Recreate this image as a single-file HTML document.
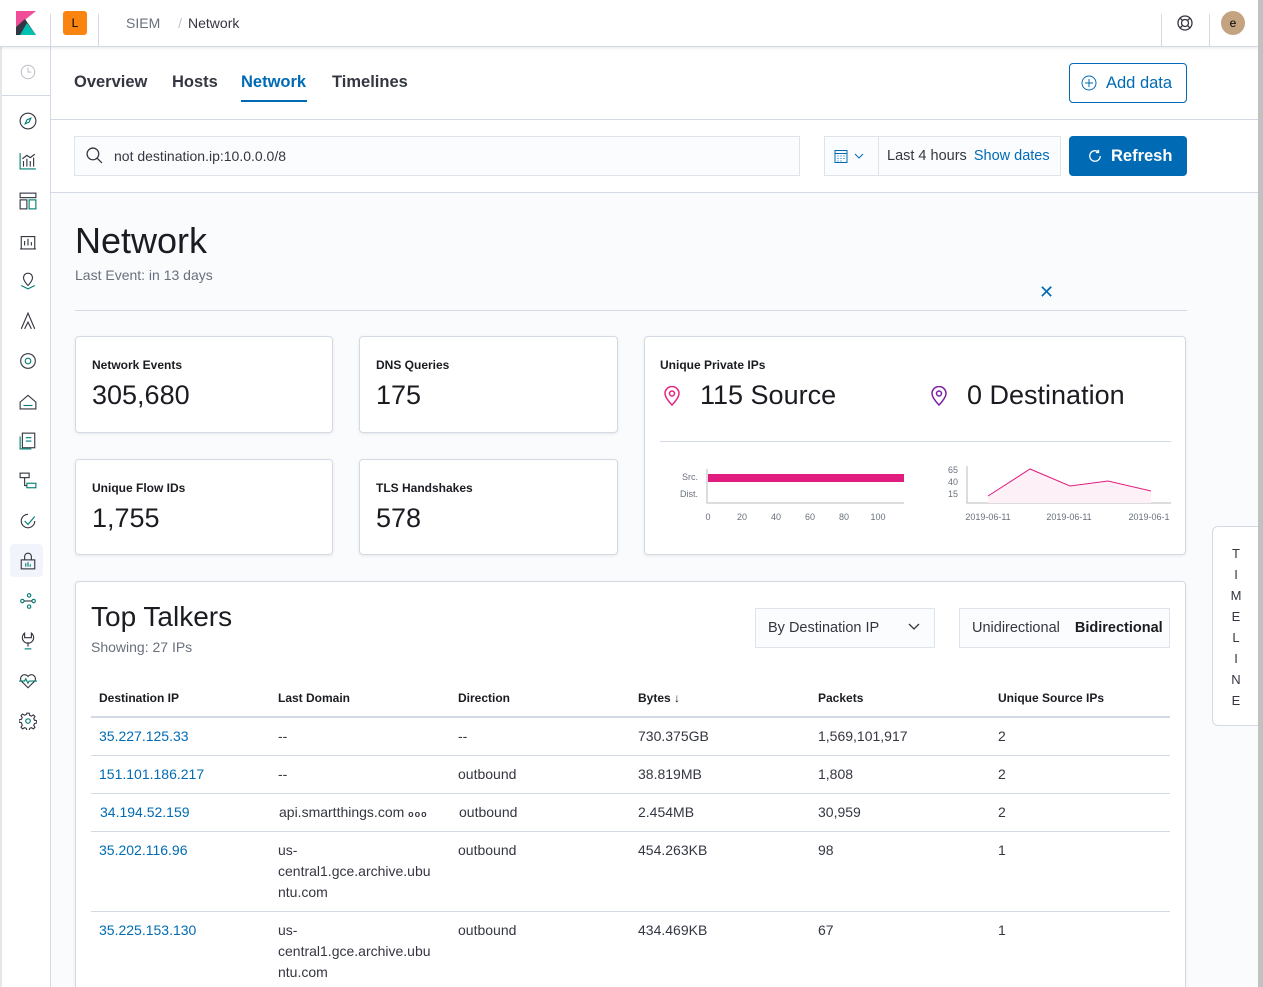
<!DOCTYPE html>
<html><head><meta charset="utf-8"><style>
*{box-sizing:border-box;margin:0;padding:0}
html,body{width:1263px;height:987px;overflow:hidden}
body{font-family:"Liberation Sans",sans-serif;color:#343741;background:#fafbfd;position:relative}
.abs{position:absolute}
.hdr{left:0;top:0;width:1258px;height:47px;background:#fff;border-bottom:1px solid #d3dae6;box-shadow:0 1px 3px rgba(0,0,0,.1);z-index:3}
.side{left:0;top:47px;width:51px;height:940px;background:#fff;border-right:1px solid #d3dae6;border-left:2px solid #e4e6ea;z-index:2}
.top{left:51px;top:47px;width:1207px;height:146px;background:#fff}
.card{background:#fff;border:1px solid #d3dae6;border-radius:4px;box-shadow:0 1px 3px rgba(0,0,0,.08)}
.lbl{font-size:12px;font-weight:bold;color:#1a1c21}
.big{font-size:27px;color:#1a1c21;font-weight:300}
.ico{position:absolute;left:17px;width:18px;height:18px}
.th{position:absolute;top:691px;font-size:12px;font-weight:bold;color:#1a1c21}
.td{position:absolute;font-size:14px;line-height:21px;color:#343741}
.lk{color:#006bb4}
.rl{position:absolute;left:91px;width:1079px;height:1px;background:#d3dae6}
.tab{position:absolute;top:26px;font-size:16.5px;font-weight:bold;color:#343741}
</style></head><body>
<div class="abs hdr">
 <svg class="abs" style="left:16px;top:11px" width="20" height="24" viewBox="0 0 20 24"><path d="M0 0H20L0 16Z" fill="#f04e98"/><path d="M0 16L9 8 20 24H0Z" fill="#343741"/><path d="M4 24L11 12 20 24Z" fill="#00bfb3"/></svg>
 <div class="abs" style="left:50px;top:14px;width:1px;height:33px;background:#d3dae6"></div>
 <div class="abs" style="left:63px;top:11px;width:24px;height:24px;background:#f98510;border-radius:3px;font-size:12px;text-align:center;line-height:24px;color:#000">L</div>
 <div class="abs" style="left:98px;top:14px;width:1px;height:33px;background:#d3dae6"></div>
 <div class="abs" style="left:126px;top:15px;font-size:14px;color:#69707d">SIEM <span style="color:#c0c4cc;margin:0 6px 0 14px">/</span><span style="color:#343741">Network</span></div>
 <div class="abs" style="left:1161px;top:14px;width:1px;height:33px;background:#d3dae6"></div>
 <div class="abs" style="left:1209px;top:14px;width:1px;height:33px;background:#d3dae6"></div>
 <svg class="abs" style="left:1177px;top:15px" width="16" height="16" viewBox="0 0 16 16" fill="none" stroke="#343741" stroke-width="1.3"><circle cx="8" cy="8" r="7"/><circle cx="8" cy="8" r="3.5"/><path d="M3 3l2.5 2.5M13 3l-2.5 2.5M3 13l2.5-2.5M13 13l-2.5-2.5"/></svg>
 <div class="abs" style="left:1221px;top:11px;width:24px;height:24px;border-radius:50%;background:#c4a381;font-size:12px;text-align:center;line-height:24px;color:#000">e</div>
</div>
<div class="abs side">
 <div class="abs" style="left:0;top:48px;width:49px;height:1px;background:#d3dae6"></div>
 <svg class="ico" style="top:16px" viewBox="0 0 16 16" fill="none" stroke="#c0c4cc"><circle cx="8" cy="8" r="6"/><path d="M8 4v4h3"/></svg>
 <svg class="ico" style="top:65px" viewBox="0 0 16 16" fill="none" stroke="#343741"><circle cx="8" cy="8" r="7"/><path d="M10.5 5.5L9 9 5.5 10.5 7 7z" stroke="#017d73"/></svg>
 <svg class="ico" style="top:105px" viewBox="0 0 16 16" fill="none" stroke="#343741"><path d="M1 1v14h14" stroke="#017d73"/><path d="M4 13V8M7 13V6M10 13V8M13 13V5M3 6l4-3 3 2 4-3"/></svg>
 <svg class="ico" style="top:145px" viewBox="0 0 16 16" fill="none" stroke="#343741"><rect x="1" y="1" width="14" height="4"/><rect x="1" y="7" width="6" height="8"/><rect x="9" y="7" width="6" height="8" stroke="#017d73"/></svg>
 <svg class="ico" style="top:185px" viewBox="0 0 16 16" fill="none" stroke="#343741"><path d="M1 15h14M2 15V4h12v11M5 12V8M8 12V6M11 12V9"/></svg>
 <svg class="ico" style="top:225px" viewBox="0 0 16 16" fill="none" stroke="#343741"><path d="M8 1a4 4 0 014 4c0 3-4 7-4 7S4 8 4 5a4 4 0 014-4z"/><path d="M2 12l6 3 6-3" stroke="#017d73"/></svg>
 <svg class="ico" style="top:265px" viewBox="0 0 16 16" fill="none" stroke="#343741"><path d="M2 15L8 1l6 14M5 15l3-6 3 6"/></svg>
 <svg class="ico" style="top:305px" viewBox="0 0 16 16" fill="none" stroke="#343741"><circle cx="8" cy="8" r="6.5"/><circle cx="8" cy="8" r="2.5" stroke="#017d73"/></svg>
 <svg class="ico" style="top:345px" viewBox="0 0 16 16" fill="none" stroke="#343741"><path d="M1 9l7-6 7 6v6H1z"/><path d="M4 12h8" stroke="#017d73"/></svg>
 <svg class="ico" style="top:385px" viewBox="0 0 16 16" fill="none" stroke="#343741"><rect x="3" y="1" width="11" height="13"/><path d="M6 5h5M6 8h5M1 4v11h10" stroke="#017d73"/></svg>
 <svg class="ico" style="top:425px" viewBox="0 0 16 16" fill="none" stroke="#343741"><rect x="1" y="1" width="8" height="4"/><rect x="7" y="10" width="8" height="4" stroke="#017d73"/><path d="M5 5v7h2"/></svg>
 <svg class="ico" style="top:465px" viewBox="0 0 16 16" fill="none" stroke="#343741"><path d="M14 8A6 6 0 118 2"/><path d="M5 8l3 3 6-7" stroke="#017d73"/></svg>
 <div class="abs" style="left:8px;top:497px;width:33px;height:33px;background:#f1f4fa;border-radius:4px"></div>
 <svg class="ico" style="top:505px" viewBox="0 0 16 16" fill="none" stroke="#343741"><rect x="2" y="7" width="12" height="8"/><path d="M5 7V4a3 3 0 016 0v3"/><path d="M6 10v3M8 9v4M10 11v2" stroke="#017d73"/></svg>
 <svg class="ico" style="top:545px" viewBox="0 0 16 16" fill="none" stroke="#017d73"><circle cx="9" cy="3" r="1.5"/><circle cx="3" cy="8" r="1.5"/><circle cx="13" cy="8" r="1.5"/><circle cx="9" cy="13" r="1.5"/><path d="M4.5 8h7" stroke="#343741"/></svg>
 <svg class="ico" style="top:585px" viewBox="0 0 16 16" fill="none" stroke="#343741"><path d="M5 1v4h6V1a5 5 0 11-6 0zM8 9v4"/><path d="M5 15h6" stroke="#017d73"/></svg>
 <svg class="ico" style="top:625px" viewBox="0 0 16 16" fill="none" stroke="#343741"><path d="M8 14L2 8a3.5 3.5 0 016-4 3.5 3.5 0 016 4z"/><path d="M0 8h5l1-2 2 4 1-2h7" stroke="#017d73"/></svg>
 <svg class="ico" style="top:665px" viewBox="0 0 16 16" fill="none" stroke="#343741"><path d="M7 1h2l.5 2 1.5.7 1.8-1.1 1.4 1.4-1.1 1.8.7 1.5 2 .5v2l-2 .5-.7 1.5 1.1 1.8-1.4 1.4-1.8-1.1-1.5.7-.5 2H7l-.5-2-1.5-.7-1.8 1.1-1.4-1.4 1.1-1.8L2.2 9.5 0 9V7l2.2-.5.7-1.5-1.1-1.8 1.4-1.4 1.8 1.1 1.5-.7z"/><circle cx="8" cy="8" r="2" stroke="#017d73"/></svg>
</div>
<div class="abs top">
 <div class="tab" style="left:23px">Overview</div>
 <div class="tab" style="left:121px">Hosts</div>
 <div class="tab" style="left:190px;color:#006bb4">Network</div>
 <div class="abs" style="left:190px;top:53px;width:66px;height:2px;background:#006bb4"></div>
 <div class="tab" style="left:281px">Timelines</div>
 <div class="abs" style="left:1018px;top:16px;width:118px;height:40px;border:1px solid #006bb4;border-radius:4px;color:#006bb4;font-size:16.5px;line-height:38px;padding-left:36px">Add data</div>
 <svg class="abs" style="left:1030px;top:28px" width="16" height="16" viewBox="0 0 16 16" fill="none" stroke="#006bb4"><circle cx="8" cy="8" r="7"/><path d="M8 4v8M4 8h8"/></svg>
 <div class="abs" style="left:0;top:72px;width:1207px;height:1px;background:#d3dae6"></div>
 <div class="abs" style="left:23px;top:89px;width:726px;height:40px;background:#fbfcfd;border:1px solid #dfe4ec;font-size:14px;line-height:38px;padding-left:39px;color:#343741">not destination.ip:10.0.0.0/8</div>
 <svg class="abs" style="left:35px;top:100px" width="17" height="17" viewBox="0 0 16 16" fill="none" stroke="#343741" stroke-width="1.2"><circle cx="6.5" cy="6.5" r="5.5"/><path d="M10.5 10.5L15 15"/></svg>
 <div class="abs" style="left:773px;top:89px;width:237px;height:40px;background:#fbfcfd;border:1px solid #dfe4ec"></div>
 <div class="abs" style="left:827px;top:89px;width:1px;height:40px;background:#dfe4ec"></div>
 <svg class="abs" style="left:783px;top:102px" width="32" height="14" viewBox="0 0 32 14" fill="none" stroke="#006bb4"><rect x="1" y="1.5" width="12" height="12"/><path d="M1 4.5h12M3.5 7h1M6.5 7h1M9.5 7h1M3.5 9.5h1M6.5 9.5h1M9.5 9.5h1M3.5 12h1M6.5 12h1"/><path d="M21 5l4 4 4-4"/></svg>
 <div class="abs" style="left:836px;top:101px;font-size:14.5px;color:#343741">Last 4 hours <span style="color:#006bb4;margin-left:3px">Show dates</span></div>
 <div class="abs" style="left:1018px;top:89px;width:118px;height:40px;background:#006bb4;border-radius:4px;color:#fff;font-size:16.5px;font-weight:bold;line-height:40px;padding-left:42px">Refresh</div>
 <svg class="abs" style="left:1037px;top:102px" width="14" height="14" viewBox="0 0 16 16" fill="none" stroke="#fff" stroke-width="1.5"><path d="M14 8a6 6 0 11-2-4.5M12 1v3h-3"/></svg>
 <div class="abs" style="left:0;top:145px;width:1207px;height:1px;background:#d3dae6"></div>
</div>
<div class="abs" style="left:75px;top:220px;font-size:36px;font-weight:300;color:#1a1c21">Network</div>
<div class="abs" style="left:75px;top:267px;font-size:14px;color:#69707d">Last Event: in 13 days</div>
<div class="abs" style="left:1039px;top:282px;font-size:18px;color:#006bb4">✕</div>
<div class="abs" style="left:75px;top:310px;width:1112px;height:1px;background:#d3dae6"></div>

<div class="abs card" style="left:75px;top:336px;width:258px;height:97px"><div class="abs lbl" style="left:16px;top:21px">Network Events</div><div class="abs big" style="left:16px;top:43px">305,680</div></div>
<div class="abs card" style="left:359px;top:336px;width:259px;height:97px"><div class="abs lbl" style="left:16px;top:21px">DNS Queries</div><div class="abs big" style="left:16px;top:43px">175</div></div>
<div class="abs card" style="left:75px;top:459px;width:258px;height:96px"><div class="abs lbl" style="left:16px;top:21px">Unique Flow IDs</div><div class="abs big" style="left:16px;top:43px">1,755</div></div>
<div class="abs card" style="left:359px;top:459px;width:259px;height:96px"><div class="abs lbl" style="left:16px;top:21px">TLS Handshakes</div><div class="abs big" style="left:16px;top:43px">578</div></div>
<div class="abs card" style="left:644px;top:336px;width:542px;height:219px">
 <div class="abs lbl" style="left:15px;top:21px">Unique Private IPs</div>
 <svg class="abs" style="left:19px;top:49px" width="16" height="20" viewBox="0 0 16 20" fill="none" stroke="#e7237f" stroke-width="1.5"><path d="M8 19S1 12 1 7.5a7 7 0 0114 0C15 12 8 19 8 19z"/><circle cx="8" cy="7.5" r="2.5"/></svg>
 <div class="abs big" style="left:55px;top:43px">115 Source</div>
 <svg class="abs" style="left:286px;top:49px" width="16" height="20" viewBox="0 0 16 20" fill="none" stroke="#7b1fa2" stroke-width="1.5"><path d="M8 19S1 12 1 7.5a7 7 0 0114 0C15 12 8 19 8 19z"/><circle cx="8" cy="7.5" r="2.5"/></svg>
 <div class="abs big" style="left:322px;top:43px">0 Destination</div>
 <div class="abs" style="left:15px;top:104px;width:511px;height:1px;background:#d3dae6"></div>
 <svg class="abs" style="left:0;top:120px" width="540" height="70" viewBox="0 0 540 70" font-family="Liberation Sans" font-size="9" fill="#69707d">
  <text x="53" y="23" text-anchor="end">Src.</text><text x="53" y="40" text-anchor="end">Dist.</text>
  <path d="M62 12v34h197" stroke="#bbb" fill="none"/>
  <rect x="63" y="17" width="196" height="8" fill="#e01c7e"/>
  <g text-anchor="middle"><text x="63" y="63">0</text><text x="97" y="63">20</text><text x="131" y="63">40</text><text x="165" y="63">60</text><text x="199" y="63">80</text><text x="233" y="63">100</text></g>
  <text x="313" y="16" text-anchor="end">65</text><text x="313" y="28" text-anchor="end">40</text><text x="313" y="40" text-anchor="end">15</text>
  <path d="M322 9v37h204" stroke="#bbb" fill="none"/>
  <path d="M343 39L385 12 425 29 463 24 506 34V46H343Z" fill="#fdf0f6"/>
  <path d="M343 39L385 12 425 29 463 24 506 34" stroke="#e01c7e" fill="none"/>
  <g text-anchor="middle"><text x="343" y="63">2019-06-11</text><text x="424" y="63">2019-06-11</text><text x="504" y="63">2019-06-1</text></g>
 </svg>
</div>

<div class="abs card" style="left:75px;top:581px;width:1111px;height:500px"></div>
<div class="abs" style="left:91px;top:601px;font-size:28px;font-weight:300;color:#1a1c21">Top Talkers</div>
<div class="abs" style="left:91px;top:639px;font-size:14px;color:#69707d">Showing: 27 IPs</div>
<div class="abs" style="left:755px;top:608px;width:180px;height:40px;background:#fbfcfd;border:1px solid #dfe4ec;font-size:14.5px;line-height:38px;padding-left:12px">By Destination IP</div>
<svg class="abs" style="left:907px;top:622px" width="14" height="10" viewBox="0 0 14 10" fill="none" stroke="#343741" stroke-width="1.3"><path d="M2 2l5 5 5-5"/></svg>
<div class="abs" style="left:959px;top:608px;width:211px;height:40px;background:#fbfcfd;border:1px solid #dfe4ec;font-size:14.5px;line-height:38px;padding-left:12px">Unidirectional <b style="margin-left:11px;color:#1a1c21">Bidirectional</b></div>

<div class="th" style="left:99px">Destination IP</div>
<div class="th" style="left:278px">Last Domain</div>
<div class="th" style="left:458px">Direction</div>
<div class="th" style="left:638px">Bytes ↓</div>
<div class="th" style="left:818px">Packets</div>
<div class="th" style="left:998px">Unique Source IPs</div>
<div class="rl" style="top:716px;height:2px"></div>

<div class="td lk" style="left:99px;top:726px">35.227.125.33</div><div class="td" style="left:278px;top:726px">--</div><div class="td" style="left:458px;top:726px">--</div><div class="td" style="left:638px;top:726px">730.375GB</div><div class="td" style="left:818px;top:726px">1,569,101,917</div><div class="td" style="left:998px;top:726px">2</div>
<div class="rl" style="top:755px"></div>
<div class="td lk" style="left:99px;top:764px">151.101.186.217</div><div class="td" style="left:278px;top:764px">--</div><div class="td" style="left:458px;top:764px">outbound</div><div class="td" style="left:638px;top:764px">38.819MB</div><div class="td" style="left:818px;top:764px">1,808</div><div class="td" style="left:998px;top:764px">2</div>
<div class="rl" style="top:793px"></div>
<div class="td lk" style="left:100px;top:802px">34.194.52.159</div><div class="td" style="left:279px;top:802px">api.smartthings.com <span style="font-size:9px;font-weight:bold;letter-spacing:1px">ooo</span></div><div class="td" style="left:459px;top:802px">outbound</div><div class="td" style="left:638px;top:802px">2.454MB</div><div class="td" style="left:818px;top:802px">30,959</div><div class="td" style="left:998px;top:802px">2</div>
<div class="rl" style="top:831px"></div>
<div class="td lk" style="left:99px;top:840px">35.202.116.96</div><div class="td" style="left:278px;top:840px;white-space:nowrap">us-<br>central1.gce.archive.ubu<br>ntu.com</div><div class="td" style="left:458px;top:840px">outbound</div><div class="td" style="left:638px;top:840px">454.263KB</div><div class="td" style="left:818px;top:840px">98</div><div class="td" style="left:998px;top:840px">1</div>
<div class="rl" style="top:911px"></div>
<div class="td lk" style="left:99px;top:920px">35.225.153.130</div><div class="td" style="left:278px;top:920px;white-space:nowrap">us-<br>central1.gce.archive.ubu<br>ntu.com</div><div class="td" style="left:458px;top:920px">outbound</div><div class="td" style="left:638px;top:920px">434.469KB</div><div class="td" style="left:818px;top:920px">67</div><div class="td" style="left:998px;top:920px">1</div>

<div class="abs" style="left:1212px;top:526px;width:48px;height:200px;background:#fff;border:1px solid #d3dae6;border-radius:6px 0 0 6px;font-size:13px;color:#343741;text-align:center;line-height:21px;padding:16px 0 0 0">T<br>I<br>M<br>E<br>L<br>I<br>N<br>E</div>
<div class="abs" style="left:1258px;top:0;width:5px;height:987px;background:#c1c1c1;z-index:5"></div>
</body></html>
